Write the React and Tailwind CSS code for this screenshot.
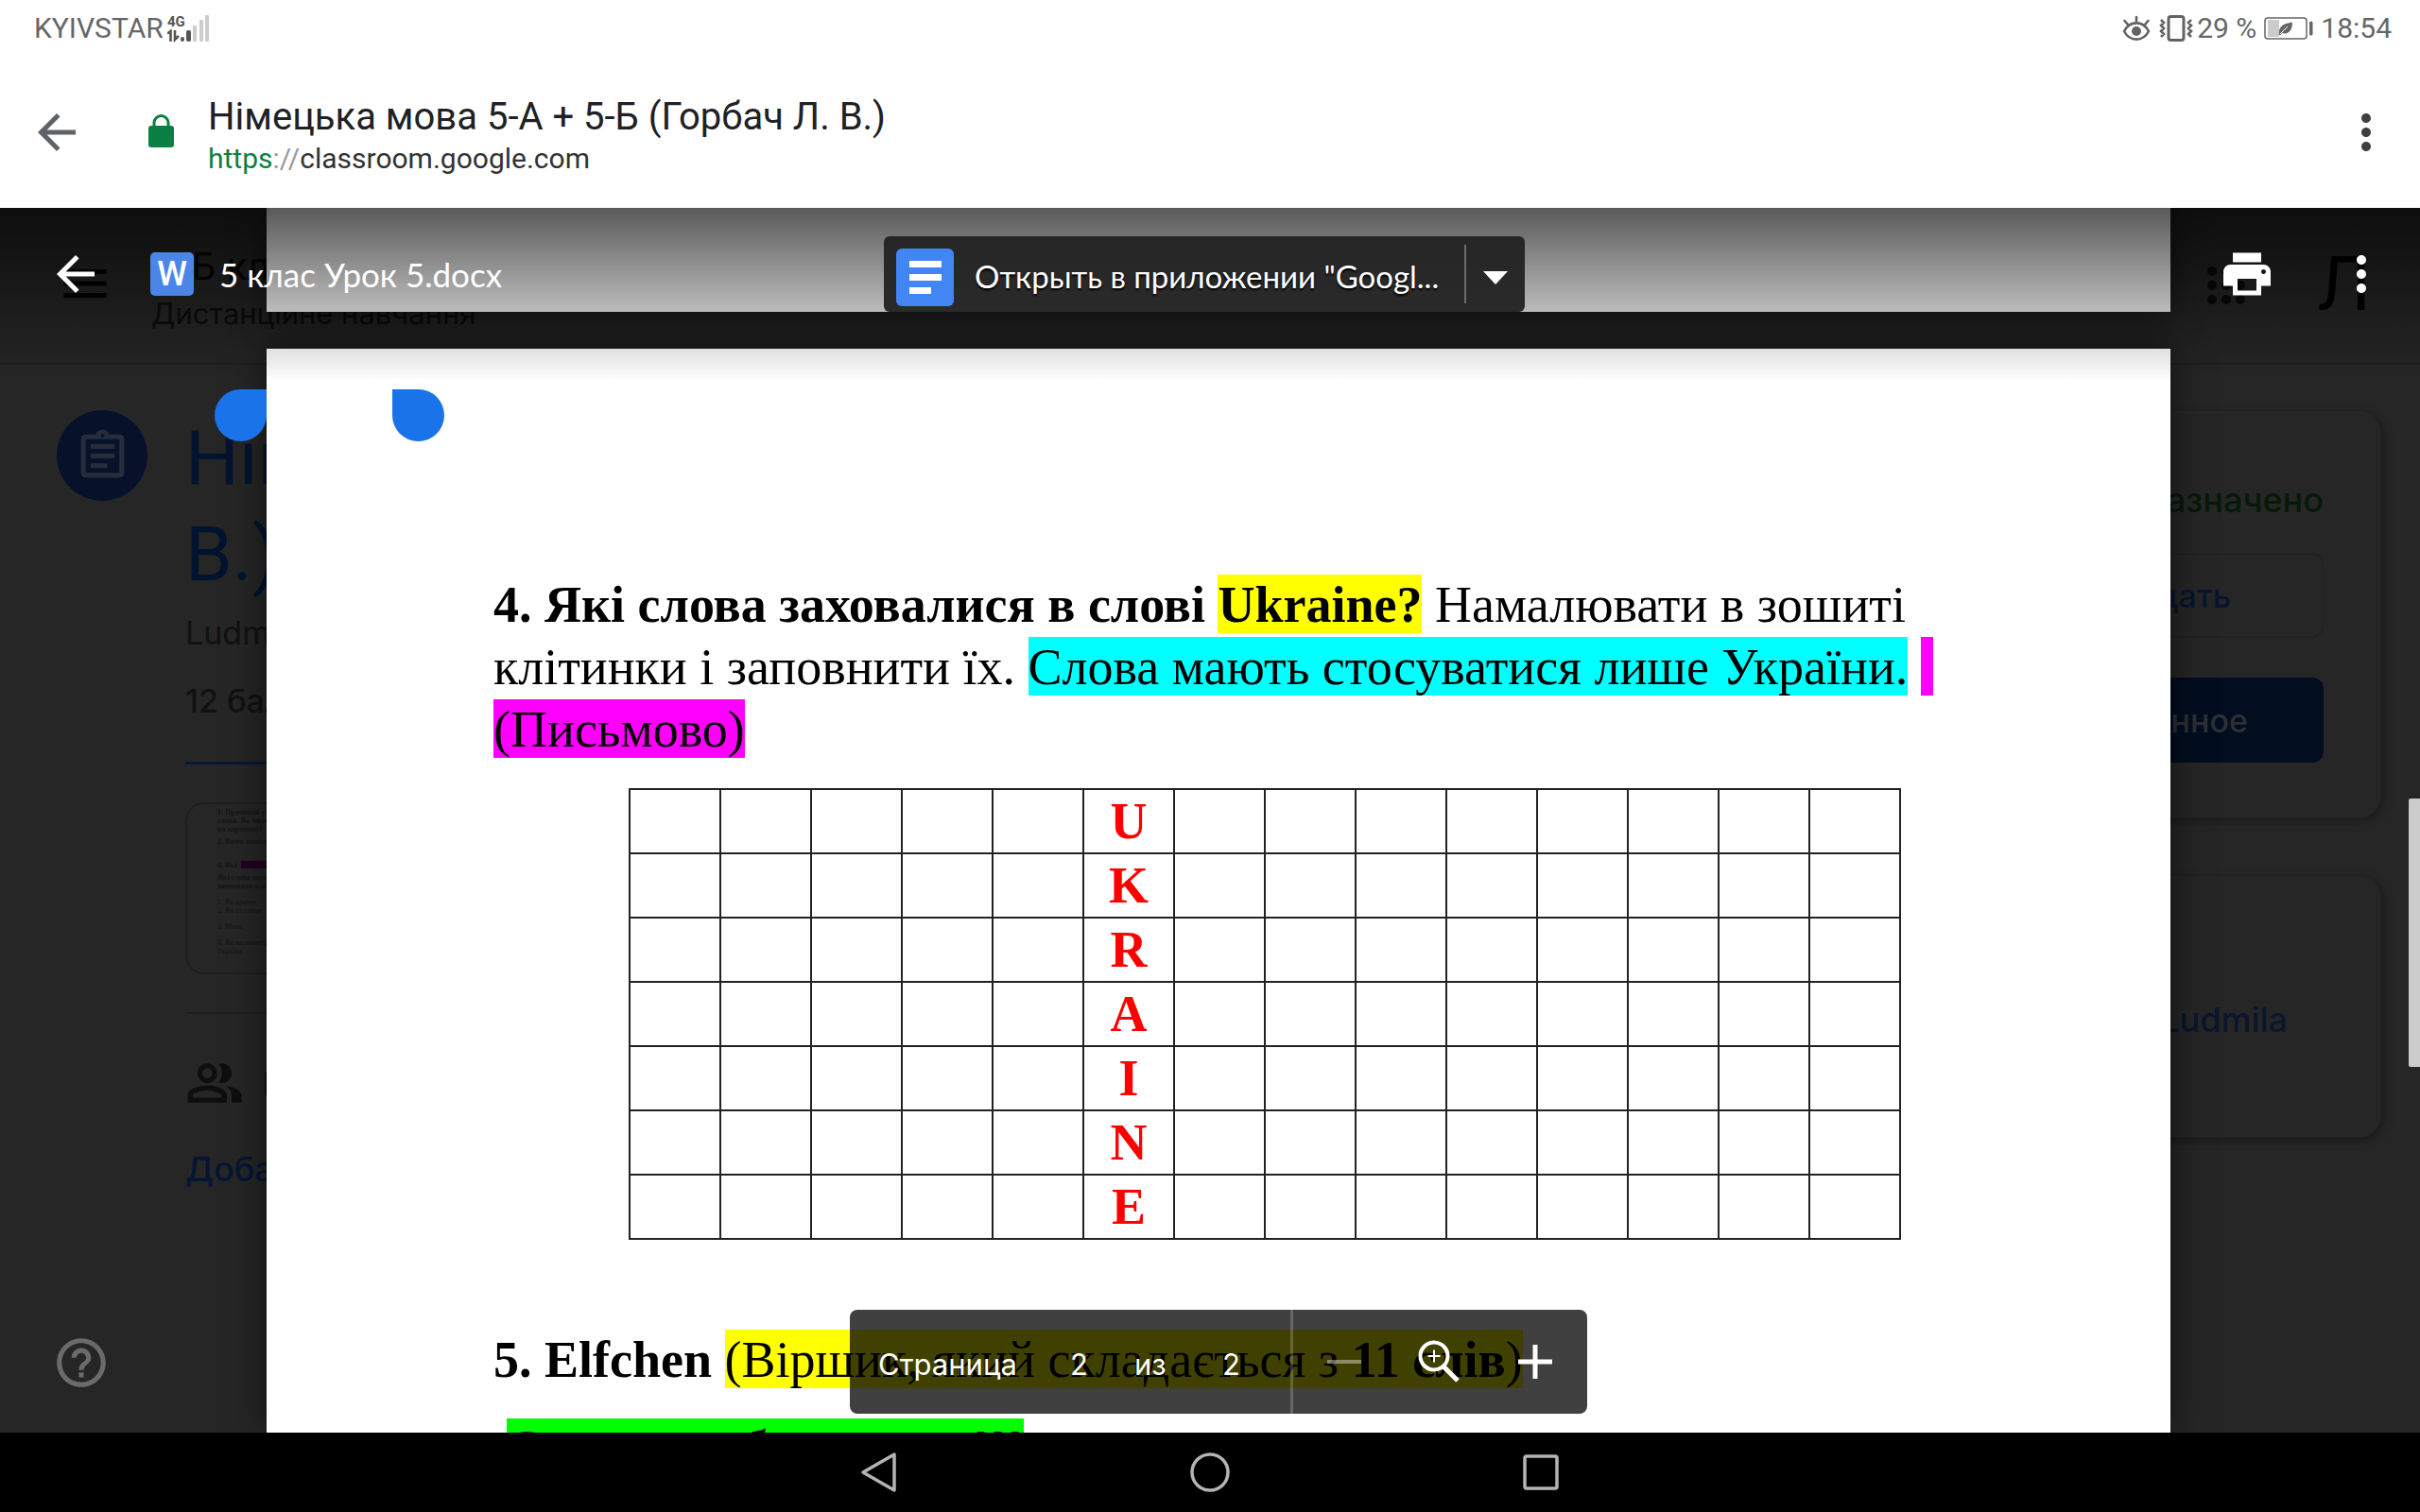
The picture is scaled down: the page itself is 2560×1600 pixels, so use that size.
import React from 'react';
import {
    MdArrowBack,
    MdMoreVert,
    MdPrint,
    MdMenu,
    MdOutlineAssignment,
    MdOutlinePeopleAlt,
    MdHelpOutline,
} from 'react-icons/md';

const letters = ['U', 'K', 'R', 'A', 'I', 'N', 'E'];
const columns = Array.from({ length: 14 }, (_, i) => i);

function SignalIcon() {
    return (
        <svg className="h-[30px] w-[46px]" viewBox="0 0 46 30">
            <text x="0" y="13" fontSize="15" fontWeight="700" fontFamily="Roboto, sans-serif" fill="#555">4G</text>
            <path d="M0 20.500l3.500-2.500v11M8 17v10l4-4" fill="none" stroke="#555" strokeWidth="2.600" />
            <rect x="14" y="24" width="4" height="5" rx="2" fill="#555" />
            <rect x="20" y="17" width="5" height="12" rx="2" fill="#555" />
            <rect x="27" y="12" width="4" height="17" rx="1" fill="#ccc" />
            <rect x="34" y="6" width="4" height="23" rx="1" fill="#ccc" />
            <rect x="40" y="1" width="4" height="28" rx="1" fill="#ccc" />
        </svg>
    );
}

function EyeIcon() {
    return (
        <svg className="h-7 w-[30px]" viewBox="0 0 30 28" fill="none" stroke="#636363" strokeWidth="2.6" strokeLinecap="round">
            <path d="M2 17C8 5.500 22 5.500 28 17C22 28.500 8 28.500 2 17z" />
            <circle cx="15" cy="17" r="5" fill="#636363" stroke="none" />
            <path d="M15 7V2M6 10L2.500 6M24 10L27.500 6" />
        </svg>
    );
}

function VibrateIcon() {
    return (
        <svg className="h-7 w-9" viewBox="0 0 36 28" fill="none" stroke="#636363">
            <rect x="10" y="1.500" width="16" height="25" rx="2.500" strokeWidth="3" />
            <path d="M2 5l3 3-3 3 3 3-3 3 3 3-3 3M34 5l-3 3 3 3-3 3 3 3-3 3 3 3" strokeWidth="2.600" />
        </svg>
    );
}

function BatteryIcon() {
    return (
        <svg className="h-6 w-[52px]" viewBox="0 0 52 24">
            <rect x="1" y="1" width="44" height="22" rx="3" fill="none" stroke="#666" strokeWidth="1.500" />
            <rect x="4" y="3" width="12" height="18" fill="#ccc" />
            <path d="M16 19C15 10 20 7 30 5.500C30 14 26 19 19 17L17.500 19z" fill="#666" />
            <path d="M17 18L25 10" stroke="#fff" strokeWidth="1" />
            <rect x="48" y="4.500" width="3.500" height="15" rx="1.500" fill="#666" />
        </svg>
    );
}

function LockIcon() {
    return (
        <svg className="mr-[30px] ml-[60px] size-10" viewBox="0 0 40 40">
            <rect x="7" y="13" width="27" height="23" rx="3" fill="#0b8043" />
            <path d="M13 15V10a7.500 7.500 0 0 1 15 0v5" fill="none" stroke="#0b8043" strokeWidth="3" />
        </svg>
    );
}

function AppsIcon() {
    return (
        <svg className="mt-[18px] mr-[68px] size-[60px]" viewBox="0 0 60 60" fill="#0a0a0a">
            {[18, 33, 48].map((x) => [17, 32, 47].map((y) => <circle key={`${x}-${y}`} cx={x} cy={y} r="5" />))}
        </svg>
    );
}

function DocsIcon() {
    return (
        <svg className="h-[61px] w-[61px] shrink-0" viewBox="0 0 61 61">
            <rect width="61" height="61" rx="6" fill="#4285f4" />
            <path d="M14 13h34v7H14zM14 27h34v7H14zM14 41h23v7H14z" fill="#fff" />
        </svg>
    );
}

function ZoomIcon() {
    return (
        <svg className="h-12 w-12" viewBox="0 0 48 48" fill="none" stroke="#fff">
            <circle cx="19" cy="18" r="14.500" strokeWidth="4" />
            <path d="M19 11.500v13M12.500 18h13" strokeWidth="2" />
            <path d="M29 29l15 15" strokeWidth="5" />
        </svg>
    );
}

function StatusBar() {
    return (
        <div className="flex h-[60px] items-center justify-between bg-white pr-[30px] pl-9 text-[30px] leading-none text-[#666]">
            <div className="flex items-center gap-1">
                <span>KYIVSTAR</span>
                <SignalIcon />
            </div>
            <div className="flex items-center">
                <EyeIcon />
                <span className="w-[9px]" />
                <VibrateIcon />
                <span className="ml-1">29 %</span>
                <span className="mr-2 ml-2 flex"><BatteryIcon /></span>
                <span>18:54</span>
            </div>
        </div>
    );
}

function AddressBar() {
    return (
        <header className="flex h-40 items-center bg-white pr-[27px] pl-[30px]">
            <button type="button" aria-label="Назад">
                <MdArrowBack className="size-[60px] text-[#5f6368]" />
            </button>
            <LockIcon />
            <div className="flex-1 pt-2">
                <h1 className="text-[40px] leading-[48px] text-[#202124]">Німецька мова 5-А + 5-Б (Горбач Л. В.)</h1>
                <a href="https://classroom.google.com" className="block text-[30px] leading-10 text-[#333]">
                    <span className="text-[#0b8043]">https</span>
                    <span className="text-[#999]">://</span>
                    classroom.google.com
                </a>
            </div>
            <button type="button" aria-label="Меню">
                <MdMoreVert className="size-[60px] text-[#3c4043]" />
            </button>
        </header>
    );
}

function AssignmentPage() {
    return (
        <div className="flex h-full flex-col font-['Inter',sans-serif] text-[#111]">
            <div className="flex h-[166px] shrink-0 items-start border-b-2 border-[#1f1f1f] pt-8 pr-[52px] pl-[60px]">
                <MdMenu className="mt-[18px] size-[60px] text-black" />
                <div className="ml-10 flex-1">
                    <p className="text-[40px] leading-[60px] text-[#050505]">5-Б клас</p>
                    <p className="text-[31px] leading-10 text-[#0c0c0c]">Дистанційне навчання</p>
                </div>
                <AppsIcon />
                <span className="text-[78px] leading-[96px] text-black">Л</span>
            </div>
            <div className="flex flex-1 justify-between pr-[41px] pl-[60px]">
                <main className="flex gap-10 pt-12">
                    <div className="flex w-24 flex-col justify-between pb-[43px]">
                        <span className="flex size-24 items-center justify-center rounded-full bg-[#07122a]">
                            <MdOutlineAssignment className="size-[61px] text-[#262c3b]" />
                        </span>
                        <button type="button" aria-label="Справка" className="-ml-[5px]">
                            <MdHelpOutline className="size-[62px] text-[#6b6b6b]" />
                        </button>
                    </div>
                    <div className="w-[600px]">
                        <h2 className="font-['Roboto',sans-serif] text-[80px] leading-[102px] text-[#00132f]">Німецька<br />В.)</h2>
                        <p className="mt-[2px] text-[34px] leading-[60px]">Ludmila</p>
                        <p className="mt-3 border-b-3 border-[#081839] pb-[34px] text-[34px] leading-[60px] font-medium">12 баллов</p>
                        <div className="mt-10 h-[182px] overflow-hidden rounded-[20px] border-2 border-[#1e1e1e] px-8 pt-1 font-['Liberation_Serif',serif] text-[8px] leading-[9px] font-bold text-[#151515]">
                            <p>1. Прочитай уважно<br />слова. Як читати<br />на картинці?</p>
                            <p className="mt-1">2. Вивч. новітні слова</p>
                            <p className="mt-4 flex">4. Які <span className="ml-1 h-2 w-20 bg-[#220022]" /></p>
                            <p className="mt-1">Які слова захова<br />заповнити клітинки</p>
                            <p className="mt-2 font-normal">1. Як країна<br />2. Як столиця</p>
                            <p className="mt-2 font-normal">3. Мова</p>
                            <p className="mt-2 font-normal">4. Як називається<br />Україна</p>
                        </div>
                        <div className="mt-10 border-t-2 border-[#1e1e1e] pt-[42px]">
                            <div className="flex items-center gap-5">
                                <MdOutlinePeopleAlt className="size-[62px] text-[#0e0e0e]" />
                                <span className="text-[34px] font-medium text-black">Комментарии</span>
                            </div>
                            <button type="button" className="mt-[30px] text-[36px] leading-[60px] font-medium text-[#041634]">Добавить комментарий</button>
                        </div>
                    </div>
                </main>
                <aside className="flex w-[640px] flex-col gap-[60px] pt-12 text-[36px] font-medium">
                    <section className="flex h-[432px] flex-col items-end rounded-3xl border border-[#222] px-[60px] pt-[62px] shadow-[2px_3px_10px_#1a1a1a]">
                        <p className="leading-[64px] text-[#061a08]">Назначено</p>
                        <button type="button" className="mt-6 h-[90px] w-full rounded-xl border-2 border-[#222] pr-24 text-right text-[34px] text-[#07152f]">Создать</button>
                        <button type="button" className="mt-[42px] h-[90px] w-full rounded-xl bg-[#020d1f] pr-20 text-right text-[34px] text-[#2c3035]">Выполненное</button>
                    </section>
                    <section className="flex h-[278px] items-center justify-end rounded-3xl border border-[#222] pt-7 pr-[98px] shadow-[2px_3px_10px_#1a1a1a]">
                        <a href="#ludmila" className="text-[#0a162d]">Ludmila</a>
                    </section>
                </aside>
            </div>
        </div>
    );
}

function WordGrid() {
    return (
        <table className="ml-[143px] table-fixed border-collapse">
            <tbody>
                {letters.map((letter) => (
                    <tr key={letter}>
                        {columns.map((col) => (
                            <td key={col} className="h-[68px] w-24 border-2 border-[#222] p-0 text-center leading-none font-bold text-[#f00]">
                                {col === 5 ? letter : ''}
                            </td>
                        ))}
                    </tr>
                ))}
            </tbody>
        </table>
    );
}

function DocumentPages() {
    return (
        <div className="flex h-full flex-col gap-[39px] pr-[264px] pl-[282px]">
            <div className="h-[110px] shrink-0 bg-white shadow-[0_0_36px_rgba(0,0,0,0.6)]" />
            <article className="relative min-h-0 flex-1 bg-white px-60 pt-[238px] font-['Liberation_Serif',serif] text-[54px] leading-[66px] whitespace-nowrap text-black shadow-[0_0_36px_rgba(0,0,0,0.6)] [&_mark]:pt-[2px]">
                <span className="absolute top-[43px] -left-[55px] size-[55px] rounded-full rounded-tr-none bg-[#1a73e8]" />
                <span className="absolute top-[43px] left-[133px] size-[55px] rounded-full rounded-tl-none bg-[#1a73e8]" />
                <p>
                    <b>4. Які слова заховалися в слові <mark className="bg-[#ff0]">Ukraine?</mark></b> Намалювати в зошиті<br />
                    клітинки і заповнити їх. <mark className="bg-[#0ff]">Слова мають стосуватися лише України.</mark> <mark className="bg-[#f0f]">&nbsp;</mark><br />
                    <mark className="bg-[#f0f]">(Письмово)</mark>
                </p>
                <div className="mt-[29px]">
                    <WordGrid />
                </div>
                <p className="mt-[94px]">
                    <b>5. Elfchen</b> <mark className="bg-[#ff0]">(Віршик, який складається з <b>11 слів</b>)</mark>
                </p>
                <p className="mt-7 pl-[14px] font-bold">
                    <mark className="bg-[#0f0]">Скласти обовязково!!!</mark>
                </p>
            </article>
        </div>
    );
}

function ViewerToolbar() {
    return (
        <div className="absolute inset-x-0 top-0 flex h-[184px] items-start bg-linear-to-b from-black/65 to-transparent pt-[30px] pr-8 pl-5 text-white">
            <div className="flex h-20 flex-1 items-center">
                <button type="button" aria-label="Закрыть" className="ml-[30px]">
                    <MdArrowBack className="size-[60px]" />
                </button>
                <span className="ml-[49px] flex size-[46px] items-center justify-center rounded-[5px] bg-[#4a86e8] font-['Roboto',sans-serif] text-[36px] leading-none font-medium">W</span>
                <span className="ml-[27px] font-['Lato',sans-serif] text-[35px]">5 клас Урок 5.docx</span>
            </div>
            <div className="flex h-20 w-[678px] items-center rounded-md bg-[#222]/95 font-['Lato',sans-serif] text-[33px]">
                <button type="button" className="flex flex-1 items-center pt-[6px] pl-[13px]">
                    <DocsIcon />
                    <span className="ml-[22px] [text-shadow:0_2px_2px_#000]">Открыть в приложении "Googl...</span>
                </button>
                <span className="h-[62px] w-[2px] bg-[#6b6b6b]" />
                <button type="button" aria-label="Другие приложения" className="flex w-[62px] justify-center">
                    <svg className="mt-2 h-[14px] w-[26px]" viewBox="0 0 26 14">
                        <path d="M0 0h26L13 14z" fill="#fff" />
                    </svg>
                </button>
            </div>
            <div className="flex h-20 flex-1 items-center justify-end gap-[61px]">
                <button type="button" aria-label="Печать">
                    <MdPrint className="size-[60px]" />
                </button>
                <button type="button" aria-label="Ещё">
                    <MdMoreVert className="size-[60px]" />
                </button>
            </div>
        </div>
    );
}

function PageControls() {
    return (
        <div className="absolute inset-x-0 bottom-5 flex justify-center pl-[18px]">
            <div className="flex h-[110px] w-[780px] items-center rounded-lg bg-black/75 font-['Inter',sans-serif] text-[31px] text-white">
                <div className="flex w-[466px] items-center pt-[6px] pl-[30px]">
                    <span className="w-[203px]">Страница</span>
                    <span className="w-[68px]">2</span>
                    <span className="w-[93px]">из</span>
                    <span>2</span>
                </div>
                <span className="h-full w-[3px] bg-white/20" />
                <div className="flex flex-1 items-center pl-9">
                    <button type="button" aria-label="Уменьшить" className="h-1 w-9 bg-white/40" />
                    <button type="button" aria-label="Масштаб" className="ml-[58px]">
                        <ZoomIcon />
                    </button>
                    <button type="button" aria-label="Увеличить" className="ml-[60px]">
                        <svg className="size-9" viewBox="0 0 36 36">
                            <path d="M18 0v36M0 18h36" stroke="#fff" strokeWidth="5" />
                        </svg>
                    </button>
                </div>
            </div>
        </div>
    );
}

function NavigationBar() {
    return (
        <nav className="flex h-[84px] items-center justify-center bg-black">
            <button type="button" aria-label="Назад" className="flex w-[350px] justify-center">
                <svg className="size-11" viewBox="0 0 44 44" fill="none" stroke="#b4b4b4" strokeWidth="3.500" strokeLinejoin="round">
                    <path d="M38 3L5 22l33 19z" />
                </svg>
            </button>
            <button type="button" aria-label="Домой" className="flex w-[350px] justify-center">
                <svg className="size-11" viewBox="0 0 44 44" fill="none" stroke="#b4b4b4" strokeWidth="3.500">
                    <circle cx="22" cy="22" r="19" />
                </svg>
            </button>
            <button type="button" aria-label="Последние" className="flex w-[350px] justify-center">
                <svg className="size-11" viewBox="0 0 44 44" fill="none" stroke="#b4b4b4" strokeWidth="3.500">
                    <rect x="5" y="5" width="34" height="34" rx="2" />
                </svg>
            </button>
        </nav>
    );
}

function App() {
    return (
        <div className="flex h-screen flex-col bg-white font-['Roboto',sans-serif]">
            <StatusBar />
            <AddressBar />
            <div className="relative min-h-0 flex-1 overflow-hidden bg-[#262626]">
                <AssignmentPage />
                <div className="absolute inset-0">
                    <DocumentPages />
                    <ViewerToolbar />
                    <PageControls />
                    <span className="absolute top-[625px] right-0 h-[284px] w-3 rounded-l-xs bg-[#cbcbcb]" />
                </div>
            </div>
            <NavigationBar />
        </div>
    );
}

export default App;
